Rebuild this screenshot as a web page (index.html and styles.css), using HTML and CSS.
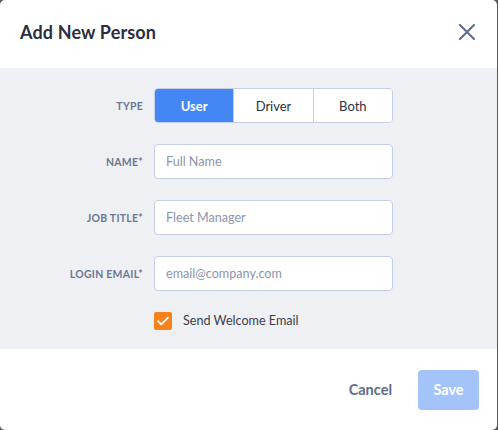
FILE: index.html
```html
<!DOCTYPE html>
<html>
<head>
<meta charset="utf-8">
<link rel="stylesheet" href="styles.css">
</head>
<body>
<div class="frame">
  <div class="modal">
    <header class="modal-header">
      <h1 class="title">Add New Person</h1>
      <button class="close" aria-label="Close">
        <svg width="16" height="16" viewBox="0 0 16 16"><path d="M1 1 L15 15 M15 1 L1 15" stroke="#5d6b8e" stroke-width="2" stroke-linecap="square" fill="none"/></svg>
      </button>
    </header>
    <div class="modal-body">
      <div class="form">
        <label class="label">TYPE</label>
        <div class="segmented">
          <button class="seg active">User</button>
          <button class="seg">Driver</button>
          <button class="seg">Both</button>
        </div>

        <label class="label">NAME*</label>
        <input class="input" placeholder="Full Name">

        <label class="label">JOB TITLE*</label>
        <input class="input" placeholder="Fleet Manager">

        <label class="label">LOGIN EMAIL*</label>
        <input class="input" placeholder="email@company.com">

        <span></span>
        <label class="check">
          <span class="box">
            <svg width="12" height="10" viewBox="0 0 12 10"><path d="M1 5.2 L4.3 8.4 L11 1.6" stroke="#fff" stroke-width="1.8" fill="none" stroke-linecap="round" stroke-linejoin="round"/></svg>
          </span>
          <span class="check-text">Send Welcome Email</span>
        </label>
      </div>
    </div>
    <footer class="modal-footer">
      <button class="btn-cancel">Cancel</button>
      <button class="btn-save">Save</button>
    </footer>
  </div>
</div>
</body>
</html>
```

FILE: styles.css
```css
* { box-sizing: border-box; }
html, body { margin: 0; padding: 0; }
body {
  background: #ffffff;
  font-family: Lato, "Open Sans", Arial, sans-serif;
  width: 500px;
  height: 430px;
  overflow: hidden;
}
.frame {
  width: 498px;
  height: 430px;
  background: #5a5a5a;
}
.modal {
  width: 497px;
  height: 430px;
  background: #fff;
  border-radius: 5px;
  overflow: hidden;
  display: flex;
  flex-direction: column;
}
.modal-header {
  height: 68px;
  display: flex;
  align-items: center;
  justify-content: space-between;
  padding: 0 22px 0 20px;
}
.title {
  margin: 0;
  font-size: 18px;
  font-weight: 700;
  color: #2b2e3f;
  letter-spacing: 0.15px;
  padding-bottom: 4px;
}
.close {
  border: 0;
  background: none;
  padding: 0;
  width: 16px;
  height: 16px;
  display: flex;
  margin-bottom: 5px;
}
.modal-body {
  background: #eef0f4;
  padding: 20px 0 19px;
}
.form {
  display: grid;
  grid-template-columns: 143px 239px;
  column-gap: 11px;
  row-gap: 21px;
  align-items: center;
}
.label {
  text-align: right;
  font-size: 10.5px;
  font-weight: 700;
  color: #6d7792;
  letter-spacing: 0.25px;
}
.segmented {
  display: flex;
  height: 35px;
  border: 1px solid #c3cfe8;
  border-radius: 4px;
  overflow: hidden;
  background: #fff;
}
.seg {
  flex: 1;
  border: 0;
  border-left: 1px solid #c3cfe8;
  background: #fff;
  font-family: inherit;
  font-size: 13px;
  color: #2b3142;
  padding: 0;
}
.seg:first-child { border-left: 0; }
.seg.active {
  background: #4586f5;
  color: #fff;
  font-weight: 700;
}
.input {
  height: 35px;
  border: 1px solid #c3cfe8;
  border-radius: 4px;
  background: #fff;
  padding: 0 11px;
  font-family: inherit;
  font-size: 12.6px;
  color: #2b3142;
  outline: none;
}
.input::placeholder { color: #8c95ad; }
.check {
  display: flex;
  align-items: center;
  gap: 11px;
  margin-top: -0.5px;
}
.box {
  width: 18px;
  height: 18px;
  background: #f7821b;
  border-radius: 2px;
  display: flex;
  align-items: center;
  justify-content: center;
}
.check-text {
  font-size: 12.6px;
  color: #3a3f4f;
}
.modal-footer {
  flex: 1;
  display: flex;
  justify-content: flex-end;
  align-items: flex-start;
  padding: 21px 18px 0 0;
}
.btn-cancel {
  border: 0;
  background: none;
  font-family: inherit;
  font-size: 14.5px;
  font-weight: 700;
  color: #5f6c8d;
  height: 40px;
  padding: 0;
  margin-right: 26px;
}
.btn-save {
  border: 0;
  width: 61px;
  height: 40px;
  border-radius: 4px;
  background: #a3c3f9;
  color: #fff;
  font-family: inherit;
  font-size: 14.5px;
  font-weight: 700;
  padding: 0;
}
```
